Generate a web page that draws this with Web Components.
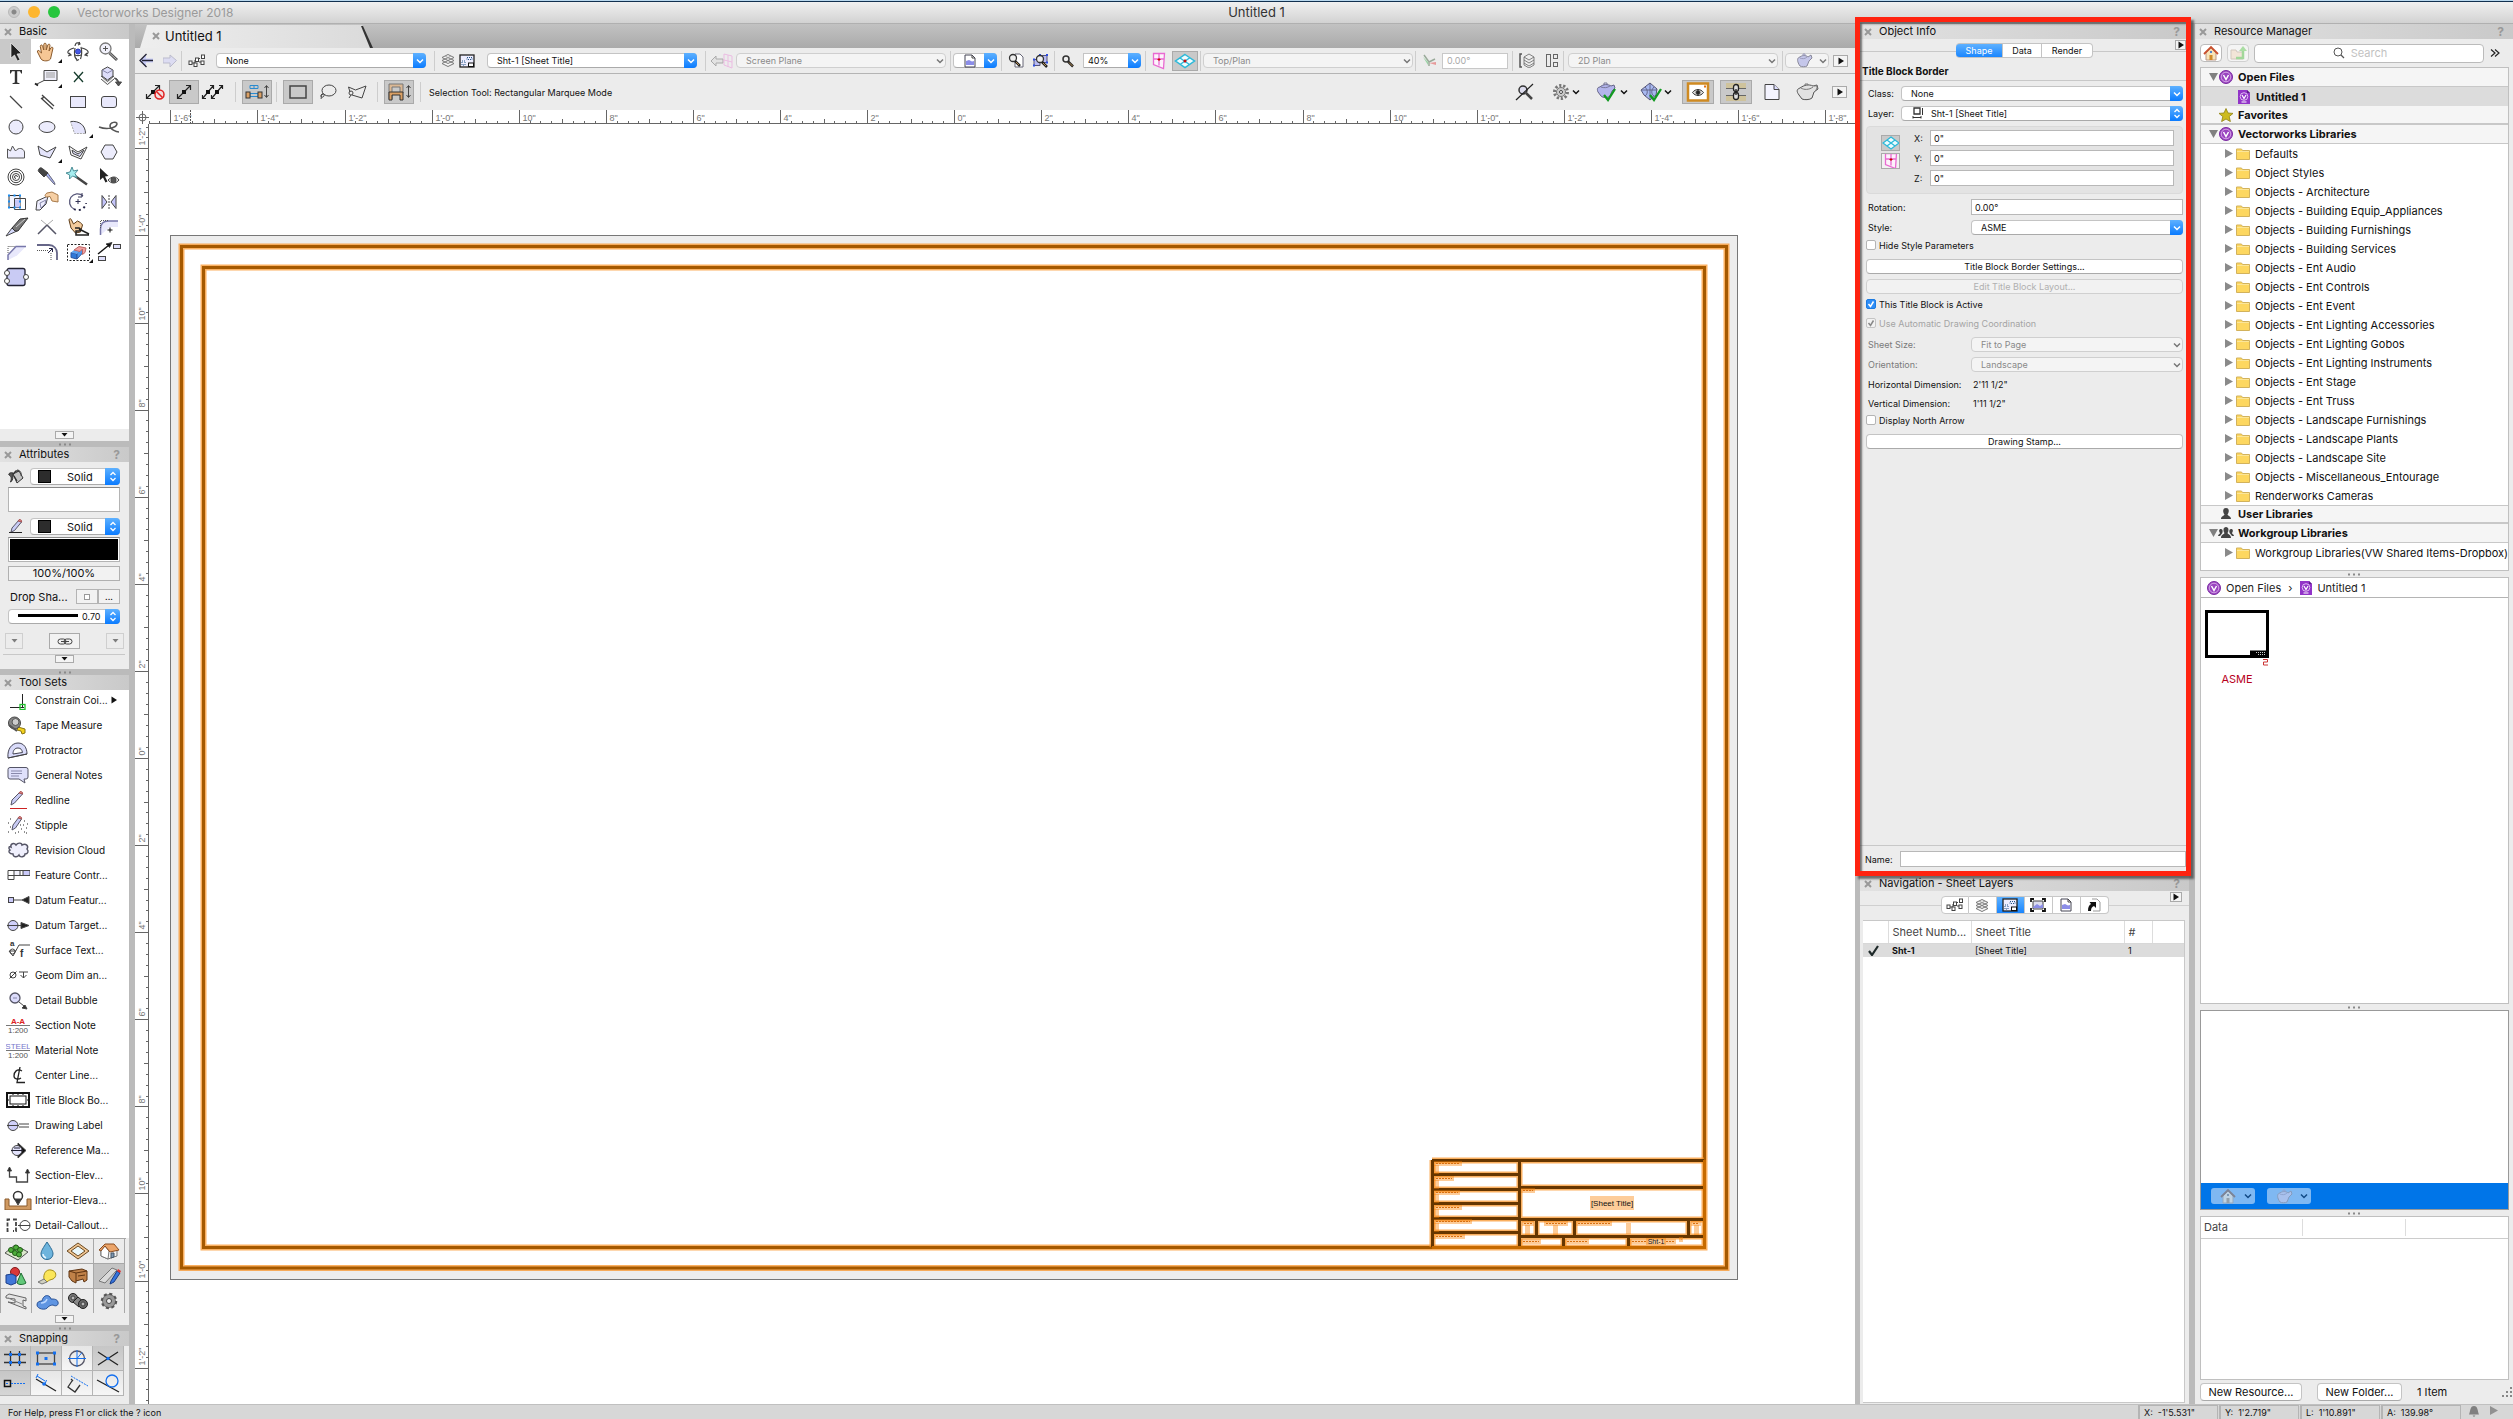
<!DOCTYPE html>
<html lang="en">
<head>
<meta charset="utf-8">
<title>Vectorworks Designer 2018 - Untitled 1</title>
<style>
html,body{height:100%;margin:0}
body{font-family:Inter,"Liberation Sans",sans-serif;color:#111;background:#ececec;overflow:hidden}
</style>
</head>
<body>
<vw-app></vw-app>
<script>
const K='#444';
/* name: [width, height, svg body]; strokes default to dark grey, no fill */
const ICONS={
close:[8,8,'<path d="M1 1l6 6M7 1L1 7" stroke="#999" stroke-width="2"/>'],
down:[9,6,'<path d="M1.500 1h6L4.500 4.500z" fill="#111" stroke="none"/>'],
play:[8,8,'<path d="M1.500 .500v7L7 4z" fill="#111" stroke="none"/>'],
chev:[8,6,'<path d="M1 1.500l3 3 3-3" stroke="currentColor" stroke-width="1.500"/>'],
updown:[8,11,'<path d="M1.500 4L4 1.500 6.500 4M1.500 7L4 9.500 6.500 7" stroke="currentColor" stroke-width="1.300"/>'],
dots:[14,3,'<path d="M1 1.500h2M6 1.500h2M11 1.500h2" stroke="#8a8a8a" stroke-width="2"/>'],
/* basic palette */
arrow:[26,22,'<path d="M8 2v15l3.500-3 3 6 2.500-1.200-3-5.800 4.500-.500z" fill="#222" stroke="#fff" stroke-width=".600"/>'],
hand:[26,22,'<path d="M7 18L3.500 11c-.600-2 1.300-2 2.200-.700L7.500 12 6.300 5.500c0-2 2-2 2.300-.300L9.800 9V3.500c.200-1.800 2.200-1.800 2.400 0V9L13.800 4c.700-1.500 2.400-1 2.200.700L15 10l2-3.300c1-1.200 2.500-.200 1.800 1.300L16.500 18c-2 2.500-7.500 2.500-9.500 0z" fill="#f6c795" stroke="#8a5a2c"/>'],
orbit:[26,22,'<circle cx="13" cy="10.500" r="2.500" fill="#4659e8" stroke="#2c3bb8"/><path d="M9 7C2 9 1 12 6 14M17 7c7 2 8 5 3 7M10 14c2 .800 4 .800 6 0M10 5c.500-3 2-4 4.500-2.500M16 6c1 4 1 8-.500 12M10 7c-1 5-.300 10 2 12M4 12l2 2-3 1M22 12l-2 2 3 1M14 1l1 2-2 1M11 17l1 2.500 2-1" stroke-width="1.200"/>'],
zoomt:[26,22,'<circle cx="9.500" cy="7.500" r="5.500" fill="#f1f1fb" stroke="#777" stroke-width="1.300"/><path d="M7 7.500h5M9.500 5v5" stroke="#555"/><path d="M13.500 12l7.500 7" stroke="#555" stroke-width="3"/><path d="M13.500 12l7 6.500" stroke="#bbb"/>'],
text:[26,22,'<path d="M7 4h12v3.500h-.800L17 5.200h-2.800V16.500l2.300.700v.800h-7v-.800l2.300-.700V5.200H9L7.800 7.500H7z" fill="#333" stroke="none"/>'],
callout:[26,22,'<path d="M10 4.500h13v10H10zM10 14.500l-8 4" fill="#f0f0fb"/><path d="M12 7h9M12 9h9M12 11h9" stroke="#999"/><path d="M1 17.500l3 2z" stroke="#222" stroke-width="2"/>'],
xmark:[26,22,'<path d="M9 6l9 10M18 6L9 16" stroke="#163c2c" stroke-width="1.300"/>'],
stack:[26,22,'<path d="M5 13l6.500 5.500L18 13M5 10l6.500 5.500L18 10" stroke="#555" fill="#eee"/><path d="M11.500 1L17 4v6l-5.500 4L6 10V4z" fill="#dedefa"/><path d="M6 4l5.500 3L17 4" stroke="#88a"/><path d="M18 12c3 0 4.500 2 4.500 5M19.500 16l3 4 3-4z" fill="#555"/>'],
line:[26,22,'<path d="M7 5l12 12" stroke-width="1.300"/>'],
dline:[26,22,'<path d="M7 7l12 11M8 4l12 11M9.500 6L8 8" stroke-width="1.300"/>'],
rect:[26,22,'<rect x="5.500" y="5.500" width="15" height="11" fill="#e9e9fc"/>'],
rrect:[26,22,'<rect x="5.500" y="5.500" width="15" height="11" rx="2.500" fill="#e9e9fc"/>'],
circ:[26,22,'<circle cx="13" cy="11" r="7" fill="#ececfc"/>'],
oval:[26,22,'<ellipse cx="13" cy="11" rx="8" ry="5.500" fill="#ececfc"/>'],
arc:[26,22,'<path d="M5.500 5.500c9-1 15 4 15 12H9.500" fill="#e4e4fb" stroke="none"/><path d="M5.500 5.500c9-1 15 4 15 12"/><path d="M5.500 5.500l4 12h11" stroke="#aaa" stroke-dasharray="2 1"/>'],
spiro:[26,22,'<path d="M3 11c8 3 17 1 18-3 0-3-7-2-7 2 0 3 6 6 9 6" stroke="#555" stroke-width="1.500"/>'],
curve:[26,22,'<path d="M4.500 17V8l3 2 2-5 3 5c3-4 8-3 9 1v6z" fill="#ececfc" stroke="#555"/>'],
poly:[26,22,'<path d="M4 5l9 6 9-5-6 11-10-3z" fill="#e4e4fb"/>'],
dpoly:[26,22,'<path d="M4 5l9 6 9-5-6 12-10-4z" fill="#fff"/><path d="M7 9l6 4 6-4-4 6.500-7-3z" fill="#dedefa"/>'],
hex:[26,22,'<path d="M9 4h8l4 7-4 7H9l-4-7z" fill="#ececfc"/>'],
spiral:[26,22,'<circle cx="13" cy="11" r="8"/><circle cx="13" cy="11" r="5.700"/><circle cx="13" cy="11" r="3.500"/><path d="M13 12.500a1.500 1.500 0 1 1 1.500-1.500"/>'],
dropper:[26,22,'<path d="M11 8l9 10 1 .500-.500-2L13 6z" fill="#a9b4f5" stroke="#667"/><path d="M5 3c1-2 3-1 4 0l5 4-4 4-5-5c-1-1-1-2 0-3z" fill="#444"/>'],
wand:[26,22,'<path d="M10 10l12 8.500" stroke="#444" stroke-width="2.500"/><path d="M7 1l1.500 4 4.500-1-3 3.500 2 4-4.500-1.500-3 3 .200-4L1 7l4-1z" fill="#a6eef0" stroke="#4b8d96"/>'],
seeker:[26,22,'<path d="M4 2v12l3-2.500 2.500 5 2-1-2.500-5 3.500-.500z" fill="#222" stroke="none"/><path d="M12 14c4-4 8-4 11 0-3 4-8 4-11 0z" fill="#ddd"/><circle cx="17.500" cy="14" r="2.500" fill="#555"/>'],
clip:[26,22,'<path d="M6 4.500h11v12H6z" fill="#f4f4fd" stroke="#333"/><path d="M11.500 7.500h11v11h-11z"/><path d="M12 8.500h5v8h-5z" fill="#c8c8f8" stroke="none"/><path d="M5 3.500h2v2H5zM10.500 3.500h2v2h-2zM16 3.500h2v2h-2zM5 9.500h2v2H5zM5 15.500h2v2H5zM16 9.500h2v2h-2zM16 15.500h2v2h-2zM10.500 15.500h2v2h-2z" fill="#1a8cf0" stroke="none"/>'],
push:[26,22,'<path d="M3 10l11-5-2 8-6 6H2z" fill="#eeeefe"/><path d="M6 12l6-3-1 4-4 4z" stroke="#88a"/><path d="M24 4l-6-3-5 1c-3 2-2 4 0 4l3-.500 2 4.500 6 1z" fill="#f6cfa4" stroke="#a87a4a"/>'],
rotate:[26,22,'<path d="M18 5A8 8 0 1 0 9 18" stroke="#557" stroke-width="1.300"/><path d="M9 18A8 8 0 0 0 21 12" stroke="#224" stroke-width="2" stroke-dasharray="2 3"/><path d="M17 2v4h-4M13 8v5M10.500 10.500h5" stroke="#335"/>'],
mirror:[26,22,'<path d="M6 4.500v13l5-6.500z" fill="#c5c5fa"/><path d="M20 4.500v13l-5-6.500z" fill="#c5c5fa"/><path d="M13 4v14" stroke-dasharray="2 1"/>'],
knife:[26,22,'<path d="M3 20l6-8 5 3z" fill="#d5d9fa"/><path d="M9 12l8-9 8-1-10 13-3 0z" fill="#777" stroke="#333"/><path d="M13 11l9-8" stroke="#ccc"/>'],
trim:[26,22,'<path d="M4 18L13 9l9 9" stroke="#556" stroke-width="1.500"/><path d="M13 9l6-5M13 9L7 4" stroke="#aaa"/>'],
splice:[26,22,'<path d="M6 12L4 4c.500-2 2-1.500 2.500 0L8.500 8l4-3c2 1 4 2 5 4l-2 7-5 1z" fill="#f3cb9c" stroke="#5b3a16"/><path d="M10 12h4c2 1 2 3 0 3h-3v4h4l9 0M14 13l10 5" stroke="#222" stroke-width="1.500"/>'],
fillet:[26,22,'<path d="M4.500 19V13c0-5 3-8 8-8H22v6H14z" fill="#e8e8fb" stroke="none"/><path d="M4.500 19v-6c0-5 3-8 8-8H22" stroke="#77a" stroke-width="1.500"/><path d="M4.500 12V4.500H13" stroke="#555" stroke-dasharray="1 1"/><path d="M14 11.500v5M11.500 14h5" stroke="#111"/>'],
chamfer:[26,22,'<path d="M5 19v-5l8-8.500h10l-9 9z" fill="#e8e8fb" stroke="none"/><path d="M5 19v-5l8-8.500h10" stroke="#77a" stroke-width="1.500"/><path d="M5 12V5.500h7" stroke="#555" stroke-dasharray="1 1"/>'],
offset:[26,22,'<path d="M3 4h12c5 0 8 4 8 8v7" stroke="#668" stroke-width="1.800"/><path d="M3 9.500h11M17 12v8" stroke="#555" stroke-dasharray="1 1"/><path d="M14 12l4-4M15 7.500h3.500V11" stroke="#224"/>'],
eraser:[26,22,'<rect x="2.500" y="3.500" width="22" height="16" stroke="#222" stroke-dasharray="2 1.500"/><path d="M6 11.500l6 1.500v5l-6-1.500z" fill="#2f78d8" stroke="#2a55a0"/><path d="M12 13l6-6v4.500L12 18z" fill="#4f95ea" stroke="#2a55a0"/><path d="M6 11.500L9 9l6 1.500-3 2.500z" fill="#5fa3f0" stroke="none"/><path d="M9 9l5-3.500 7 1.500-1 4.500-2.500 2V8L15 10.500z" fill="#f0a0a0" stroke="#b66"/>'],
connect:[26,22,'<path d="M2 13L13 4" stroke-width="1.400" stroke="#111"/><path d="M16 1.500l-6 1.500 3.500 3.500z" fill="#111"/><rect x="17.500" y="3.500" width="7" height="4" fill="#dedefa"/><rect x="2.500" y="15.500" width="7" height="4" fill="#dedefa"/>'],
node:[26,22,'<rect x="4" y="2.500" width="18" height="17" rx="2" fill="#c9cbf4" stroke="#223" stroke-width="1.300"/><circle cx="4" cy="7" r="2.500" fill="#fff"/><circle cx="4" cy="15" r="2.500" fill="#fff"/><circle cx="23" cy="11" r="2.500" fill="#fff"/>'],
/* attributes */
bucket:[16,16,'<path d="M5 5l6-3 4 7-6 5z" fill="#c4c4c4" stroke="#333"/><path d="M5 5l3-3 3 0M6 7l3 5" stroke="#333" stroke-width="1.300"/><path d="M5 4C2 3 0 5 1 6c2 1 3 3 1.500 7C5 12 5 8 5 5z" fill="#555" stroke="#333"/><path d="M9 1c3 0 5 3 4 6" stroke="#444"/>'],
pencil:[16,16,'<path d="M3 13l1-4 7-8 2.500 2-7 8.500z" fill="#c9ccf5" stroke="#556"/><path d="M10 2l1-1.300c2-.500 3 1 2.500 2.300z" fill="#e58a8a" stroke="#a55"/><path d="M1 13.500h13" stroke="#222"/>'],
chain:[16,9,'<rect x="1" y="2" width="8" height="5" rx="2.500"/><rect x="7" y="2" width="8" height="5" rx="2.500"/><path d="M4 4.500h8"/>'],
/* tool sets */
t0:[24,20,'<path d="M4 17.500h14M16.500 4v13" stroke="#222"/><rect x="14" y="14.500" width="5" height="5" stroke="#1fbf2c" stroke-width="1.300"/>'],
t1:[24,20,'<path d="M12 12l7 2v4l-3 1-1-3-4-1z" fill="#f2d11d" stroke="#8a7410"/><circle cx="8.500" cy="8" r="6" fill="#888" stroke="#444"/><circle cx="9.500" cy="7" r="3.500" fill="#ccc" stroke="#555"/><path d="M3 10l8 6" stroke="#555" stroke-width="2"/>'],
t2:[24,20,'<path d="M2 18C1 9 6 3 12 3s9 5 9 11z" fill="#d9dbfa" stroke="#445"/><path d="M7 14c0-4 2-6 5-6s4 2 4.500 4.500z" fill="#fff" stroke="#445"/><path d="M2 18l19-4"/>'],
t3:[24,20,'<path d="M4 2.500h16q2 0 2 2V12q0 2-2 2h-2l1 4-6-4H4q-2 0-2-2V4.500q0-2 2-2z" fill="#dfe0fb" stroke="#556"/><path d="M5 6h11M5 8.500h11M5 11h8" stroke="#88a"/>'],
t4:[24,20,'<path d="M5 15l1-5 8-8 2.500 2-8 9z" fill="#c9ccf5" stroke="#556"/><path d="M13 3l1-1.300c2-.500 3 1 2.500 2.300z" fill="#e58a8a" stroke="#a55"/><path d="M4 18.500h17" stroke="#c22"/>'],
t5:[24,20,'<path d="M6 15l1-5 6-8 2.500 2-6 9z" fill="#c9ccf5" stroke="#556"/><path d="M12 3l1-1.300c2-.500 3 1 2.500 2.300z" fill="#e58a8a" stroke="#a55"/><path d="M2 8h1M4 12h1M2 17h1M12 17h1M15 14h1M18 17h1M17 10h1M20 13h1M14 10h1M18 6h1M9 18h1M4 4h1M21 9h1M20 18h1" stroke="#222" stroke-width="1.200"/>'],
t6:[24,20,'<path d="M5 7c-1-3 3-5 5-2 2-3 6-2 6 0 4-2 7 1 5 4 2 2 1 5-2 5 0 3-5 4-6 1-2 3-6 2-6-1-4 0-5-3-3-4-2-2-1-4 1-3z" fill="#f0f0fd" stroke="#556" stroke-width="1.400"/>'],
t7:[24,20,'<path d="M2 5.500h22v5H2zM2 10.500v4h6v-4" fill="#fff"/><path d="M8 5.500h6v5H8z" fill="#f2f2fd"/><path d="M17 5.500h7v5h-7z" fill="#c9c9f8"/>'],
t8:[24,20,'<rect x="2.500" y="7.500" width="5" height="5" fill="#c9c9f8"/><path d="M8 10h8"/><path d="M23 6.500v7L16 10z" fill="#222"/>'],
t9:[24,20,'<circle cx="7" cy="10.500" r="5" fill="#d0d0fa"/><path d="M1 10.500h16"/><path d="M15 7.500v6l8-3z" fill="#222"/>'],
t10:[24,20,'<path d="M3 11l4 5 6-11h11M3 11h7"/><circle cx="6.500" cy="11.500" r="2.500"/><text x="4" y="6" font-size="8" font-weight="700" fill="#333" stroke="none" font-family="Liberation Sans">a</text><text x="14" y="17" font-size="10" font-weight="700" fill="#333" stroke="none" font-family="Liberation Sans">f</text>'],
t11:[24,20,'<circle cx="7" cy="10" r="3"/><path d="M3.500 13.500l7-7M13 7h9M17.500 7v6M14.500 10l3 3 3-3"/>'],
t12:[24,20,'<circle cx="9" cy="8" r="5" fill="#dcdcfc" stroke="#556" stroke-width="1.300"/><path d="M7 8h4" stroke="#88a"/><path d="M13 12l5 4"/><path d="M21 19l-5-1 3-3z" fill="#333"/>'],
t13:[24,20,'<path d="M0 10.500h24" stroke="#777"/><text x="12" y="9" text-anchor="middle" font-size="8" font-weight="700" fill="#d22" stroke="none" font-family="Liberation Sans">A-A</text><text x="12" y="18" text-anchor="middle" font-size="8" fill="#555" stroke="none" font-family="Liberation Sans">1:200</text>'],
t14:[24,20,'<path d="M0 10.500h24" stroke="#777"/><text x="12" y="9" text-anchor="middle" font-size="8" fill="#77c" stroke="none" font-family="Liberation Sans">STEEL</text><text x="12" y="18" text-anchor="middle" font-size="8" fill="#555" stroke="none" font-family="Liberation Sans">1:200</text>'],
t15:[24,20,'<path d="M16 6c-5-3-8 1-8 5 0 3 4 4 7 2M14 2l-3 15.500h8" stroke="#222" stroke-width="1.300"/>'],
t16:[24,20,'<rect x="1" y="3" width="22" height="14" stroke="#111" stroke-width="2"/><rect x="4" y="6" width="16" height="8" stroke="#111"/><path d="M7 4v1M12 4v1M17 4v1M7 15v1M12 15v1M17 15v1M2 10h1M21 10h1" stroke="#111"/>'],
t17:[24,20,'<circle cx="7" cy="10.500" r="5" fill="#d0d0fa"/><path d="M1 10.500h12M13 9h10M13 12h10"/>'],
t18:[24,20,'<path d="M12 3l8 7.500-8 7.500z" fill="#111"/><circle cx="11" cy="10.500" r="5" fill="#e3e3fc"/><path d="M5 10.500h12M8 8h6" stroke="#223"/>'],
t19:[24,20,'<path d="M3.500 6v6h7v5h11V8" stroke-width="1.300"/><path d="M1.500 6l2-4 2 4zM19.500 8l2-4 2 4z" fill="#222"/>'],
t20:[28,20,'<path d="M1 9h4v7h18V9h4v11H1z" fill="#d09a62" stroke="#8a5a2c"/><circle cx="14" cy="6" r="4.500" fill="#fff" stroke="#333" stroke-width="1.500"/><path d="M10.500 9l3.500 6 3.500-6z" fill="#333"/>'],
t21:[26,20,'<path d="M5 4.500H2.500V16H5M8 4.500h3V16H8" stroke-width="1.800" stroke-dasharray="4 1.500"/><circle cx="20" cy="10.500" r="5"/><path d="M13 10.500h12"/>'],
g0:[24,20,'<path d="M1 12l10-8 13 7-10 8z" fill="#dbe8cc" stroke="#555"/><circle cx="7" cy="9" r="2.500" fill="#4fae3c" stroke="#205f16"/><circle cx="12" cy="6.500" r="2.500" fill="#4fae3c" stroke="#205f16"/><circle cx="11" cy="12" r="2.500" fill="#4fae3c" stroke="#205f16"/><circle cx="16" cy="9" r="2.500" fill="#4fae3c" stroke="#205f16"/><circle cx="15" cy="13.500" r="2.500" fill="#4fae3c" stroke="#205f16"/>'],
g1:[24,20,'<path d="M12 1c4 6 6 9 6 12a6 5.500 0 0 1-12 0c0-3 2-6 6-12z" fill="#6db4dd" stroke="#2d6c96"/><path d="M8 13c0 2 1 3 3 4" stroke="#e5f5ff" stroke-width="1.500"/>'],
g2:[24,20,'<path d="M12 2l11 8-11 8L1 10z" fill="#f0c592" stroke="#6b4a22"/><path d="M12 5l7 5-7 5-7-5z" fill="#e9f7fb" stroke="#6b4a22"/>'],
g3:[24,20,'<path d="M4 9v6l7 3 9-3V8z" fill="#f2f2f2" stroke="#777"/><path d="M4 9l4-4 4 5-1 8-7-3z" fill="#fff" stroke="#777"/><path d="M2 9l6-6 9 0 5 6-9 2-5-6-4 5z" fill="#eba469" stroke="#8a4c20"/><path d="M14 12h3v4l-3 1z" fill="#7c96b0" stroke="#456"/>'],
g4:[24,20,'<circle cx="11" cy="6" r="4.500" fill="#d8383a" stroke="#831b1e"/><path d="M2 9l6-1 4 2v7l-5 2-5-2z" fill="#4177d8" stroke="#1c3f8a"/><path d="M17 7l5 10c-3 2-7 2-9 0z" fill="#63c87a" stroke="#1d6b30"/>'],
g5:[24,20,'<path d="M9 13c-1-5 2-10 7-9 6 1 6 7 2 9-3 1-4 1-6 3z" fill="#fbe65a" stroke="#a58d18"/><path d="M3 16l6-3 3 3-5 2z" fill="#d0d0c0" stroke="#777"/>'],
g6:[24,20,'<path d="M3 5l13-2 5 2v9l-3 2-1-3-7 2v2l-4-2-3-4z" fill="#c08148" stroke="#5e3412"/><path d="M3 5l7 2 11-2M10 7v8M12 10l7-1" stroke="#5e3412"/>'],
g7:[24,20,'<path d="M2 15L15 2l5 2L8 17z" fill="#dadada" stroke="#777"/><path d="M14 15l6-10 3 2-6 9-4 2z" fill="#3774dd" stroke="#183d85"/><path d="M20 5l1-2 3 2-1 2z" fill="#d33" stroke="none"/>'],
g8:[24,20,'<path d="M2 5l3-2 17 4v3l-3-1v6l3 1v2L4 11l7 1V8L2 7z" fill="#e4e4e4" stroke="#666"/><path d="M4 7l14 6" stroke="#888"/>'],
g9:[24,20,'<path d="M2 14c0-3 2-4 5-4 1-5 5-7 8-4l1 2c3 0 6 0 7 3s-2 5-5 3c-2 0-4 1-5 2-2 4-11 2-11-2z" fill="#5f95e2" stroke="#2a5296"/><path d="M6 12c3 0 5-1 6-4" stroke="#bcd8ff" stroke-width="1.500"/>'],
g10:[24,20,'<circle cx="7" cy="7" r="4.500" fill="#777" stroke="#222"/><path d="M7 11l6 5 5-5-6-5z" fill="#888" stroke="#222"/><circle cx="17" cy="13" r="4.500" fill="#666" stroke="#222"/><circle cx="17" cy="13" r="2" fill="#bbb"/><circle cx="7" cy="7" r="2" fill="#bbb"/>'],
g11:[24,20,'<circle cx="12" cy="10" r="7" fill="#777" stroke="#555" stroke-width="2.500" stroke-dasharray="3 2.500"/><circle cx="12" cy="10" r="6" fill="#999" stroke="none"/><circle cx="12" cy="10" r="2.500" fill="#eee"/>'],
/* snapping */
s0:[26,20,'<path d="M8.500 3v15M17.500 3v15M2 6.500h22M2 14.500h22" stroke="#333" stroke-width="1.300"/><path d="M7 5h3v3H7zM16 5h3v3h-3zM7 13h3v3H7zM16 13h3v3h-3z" fill="#1470f0" stroke="none"/>'],
s1:[26,20,'<rect x="4.500" y="5" width="17" height="11" stroke-width="1.300"/><path d="M3 3.500h3v3H3zM20 3.500h3v3h-3zM3 14.500h3v3H3zM20 14.500h3v3h-3zM11.500 9h3v3h-3z" fill="#1470f0" stroke="none"/>'],
s2:[26,20,'<circle cx="13" cy="10.500" r="7.500" stroke="#556" stroke-width="1.300"/><path d="M13 2v17M4 10.500h18M13 10.500l5-6" stroke="#1470f0"/>'],
s3:[26,20,'<path d="M3 4l20 13M3 17L23 4" stroke="#222" stroke-width="1.300"/><circle cx="13" cy="10.500" r="1.800" fill="#1470f0" stroke="none"/>'],
s4:[26,20,'<rect x="2.500" y="7.500" width="6" height="6" stroke="#111" stroke-width="1.500"/><path d="M4 10.500h2M9 10.500h15" stroke="#1470f0" stroke-dasharray="2 1"/>'],
s5:[26,20,'<path d="M3 6l20 12" stroke="#222" stroke-width="1.300"/><path d="M4 3l8 5M12 11l1.500-4M3 5l2-4" stroke="#1470f0"/><circle cx="11" cy="11" r="1.800" fill="#1470f0" stroke="none"/>'],
s6:[26,20,'<path d="M8 8l-4 6 7 5 5-7M9 8l-2-2" stroke="#333" stroke-width="1.300"/><path d="M7 3l17 10" stroke="#1470f0" stroke-dasharray="2 1"/>'],
s7:[26,20,'<path d="M2 7l22 12" stroke="#222" stroke-width="1.300"/><circle cx="17" cy="8" r="6" stroke="#1470f0" stroke-width="1.300"/>'],
/* view bar */
back:[14,16,'<path d="M7 1.500v4h7v4H7v4L1 7.500z" fill="#c9cdf8" stroke="none"/><path d="M7.500 1L1 7.500 7.500 14M3 7.500h11" stroke="#223" stroke-width="1.300"/>'],
fwd:[14,16,'<path d="M7 2v3H0v5h7v4l6.500-6.500z" fill="#dcdcf2" stroke="#bbc"/>'],
cls:[18,14,'<path d="M3 9h4V6M8 8l4-4M11 8h4" stroke="#444"/><rect x="1" y="7" width="3" height="3.500" fill="#fff"/><rect x="6" y="9" width="3" height="3.500" fill="#fff"/><rect x="7.500" y="4" width="3" height="3.500" fill="#fff"/><rect x="13.500" y="1" width="3" height="3.500" fill="#fff"/><rect x="13" y="7" width="3" height="3.500" fill="#fff"/>'],
lay:[14,15,'<path d="M1 10.500l6 3 6-3-6-3zM1 7.500l6 3 6-3-6-3zM1 4.500l6 3 6-3-6-3z" fill="#f4f4f4" stroke="#777"/><path d="M4 3l6 3M10 3L4 6" stroke="#999" stroke-width=".800"/>'],
sheet:[16,14,'<rect x="1" y="1" width="14" height="12" fill="#eef" stroke="#222" stroke-width="1.300"/><path d="M3 7h3v4H3zM8 3.500h5v2H8z" stroke="#258" stroke-dasharray="1 1"/><rect x="9.500" y="9" width="5" height="3.500" fill="#fff" stroke="#111"/>'],
plane:[24,16,'<g opacity=".650"><path d="M1 8l5-5v3h7v4H6v3z" fill="#ddd" stroke="#888"/><path d="M14 1l8 2v12l-8-3zM14 7l8 2M18 2v12" stroke="#eba2dd"/></g>'],
pg:[14,14,'<path d="M2 1h7l3 3v9H2z" fill="#fff" stroke="#445"/><path d="M3 11V7l3-1 3 1.500 2-.500v4z" fill="#8b8de8" stroke="none"/><path d="M9 1v3h3"/>'],
magpg:[16,15,'<path d="M7 1h5l3 3v10H7z" fill="#fff" stroke="#667"/><circle cx="5" cy="5" r="3.500" fill="#eee" stroke="#333" stroke-width="1.300"/><path d="M7 8l5 5" stroke="#222" stroke-width="2.500"/><path d="M8 9l3 3" stroke="#b98d50"/>'],
magsel:[18,15,'<path d="M2 6.500h6v6H2zM8 2.500h7v7H8z" fill="#b9bbf4" stroke="#557"/><path d="M1 5.500h2v2H1zM1 11.500h2v2H1zM7 1h2v2H7zM14 1h2v2h-2zM14 8.500h2v2h-2z" fill="#2b4ae0" stroke="none"/><circle cx="8" cy="6" r="3.500" fill="#eee" stroke="#333" stroke-width="1.300"/><path d="M10 9l5 5" stroke="#222" stroke-width="2.500"/><path d="M11 10l3 3" stroke="#b98d50"/>'],
mag:[14,14,'<circle cx="5" cy="5" r="3" fill="#eee" stroke="#333" stroke-width="1.500"/><path d="M7 7.500l5 5" stroke="#222" stroke-width="2.500"/><path d="M8 8.500l3.500 3.500" stroke="#b98d50"/>'],
pink:[14,18,'<path d="M1.500 1.500h11l-1 15-10-4zM1.500 7h11M7 1.500v12" fill="#fdf2fb" stroke="#e96ad2" stroke-width="1.300"/><path d="M5.500 7.500h3M7 6v3" stroke="#c00"/>'],
cyan:[18,14,'<path d="M9 1l8 6-8 6-8-6zM5 4l8 6M13 4l-8 6" fill="#eefcff" stroke="#2cb9d9" stroke-width="1.300"/>'],
cyanr:[22,16,'<path d="M11 1.500l9.500 6.500-9.500 6.500L1.500 8zM6 5l9.500 6.500M15.500 5L6 11.500" fill="#eefcff" stroke="#2cb9d9" stroke-width="1.500"/><path d="M9.500 8h3M11 6.500v3" stroke="#c00" stroke-width="1.500"/>'],
axis:[16,15,'<path d="M2 2l5 7 6-3M7 9v4" stroke="#9a9" stroke-width="1.500"/><path d="M1 4l5 5v3z" fill="#9ad3a5" stroke="none"/><path d="M7 10l7-1v3z" fill="#e79a9a" stroke="none"/>'],
mlay:[16,15,'<path d="M3 1H1v13h2" stroke="#555" stroke-width="1.500"/><path d="M5 4l5-3 5 3v8l-5 3-5-3zM5 4l5 3 5-3M5 7l5 3 5-3M5 10l5 3 5-3" stroke="#666" stroke-width=".800"/>'],
panes:[14,15,'<rect x="1.500" y="1.500" width="4" height="12" stroke="#666"/><rect x="8.500" y="1.500" width="4" height="4" stroke="#666"/><rect x="8.500" y="9.500" width="4" height="4" stroke="#666"/>'],
pot:[18,15,'<path d="M4 4.500C2 5 2 9 5 13c1 1 6 1 7 0l2-5 3-3-1-3-3 2c-2-2-6-2-9 .500z" fill="#c5c7ea" stroke="#889"/><path d="M5 5c2 1 5 1 7-1M8 3V1h2v2" stroke="#99b"/>'],
/* tool mode bar */
nosnap:[20,16,'<path d="M2 14L14 2M10 1.500h4.500V6M1.500 10v4.500H6" stroke="#222" stroke-width="1.200"/><path d="M6 6h4v4H6z" fill="#111" stroke="none"/><circle cx="14.500" cy="10.500" r="4.500" stroke="#e02020" stroke-width="1.500" fill="#f3dcdc"/><path d="M11.500 7.500l6 6" stroke="#e02020" stroke-width="1.500"/>'],
snap:[16,16,'<path d="M2 14L14 2M10 1.500h4.500V6M1.500 10v4.500H6" stroke="#222" stroke-width="1.200"/><path d="M6 6h4v4H6z" fill="#111" stroke="none"/>'],
snap2:[24,16,'<path d="M2 14L12 2M9 1.500h3.500V5M1.500 11v3.500H5M11 14L21 2M18 1.500h3.500V5M10.500 11v3.500H14" stroke="#222" stroke-width="1.200"/><path d="M5 6h4v4H5zM14 6h4v4h-4z" fill="#111" stroke="none"/>'],
mv:[26,18,'<path d="M6 2.500h8v3H6zM10 2.500v3M6 10.500h8v3H6zM4 10.500h14" stroke="#2a8bd0"/><rect x="2" y="9" width="4" height="6" fill="#dba064" stroke="#333"/><rect x="14" y="9" width="4" height="6" fill="#dba064" stroke="#333"/><path d="M22.500 3v11M20.500 5l2-2.500 2 2.500M20.500 12l2 2.500 2-2.500"/>'],
box:[18,14,'<rect x="1" y="1" width="16" height="12" stroke-width="1.500"/>'],
lasso:[18,16,'<ellipse cx="10" cy="6.500" rx="7" ry="5.500"/><path d="M4 10c-3 1-2 4 0 3s1-4-1-3 0 4-1 5"/>'],
plasso:[20,16,'<path d="M3 8L1.500 3l7 3L19 2l-4 12-10-3"/><circle cx="4" cy="9" r="2"/><path d="M4 11l-2 3"/>'],
door:[26,20,'<path d="M3 17V2h14v9h-3V5H6v12z" fill="#dbb894" stroke="#777"/><path d="M3 18v-8h14v8h-3v-5H6v5z" fill="#dba064" stroke="#333"/><path d="M22.500 4v11M20.500 6l2-2.500 2 2.500M20.500 13l2 2.500 2-2.500"/>'],
magslash:[22,18,'<circle cx="9" cy="7" r="4" fill="#dde" stroke="#333" stroke-width="1.500"/><path d="M12 10l6 6" stroke="#444" stroke-width="2.500"/><path d="M2 17L19 1" stroke="#222" stroke-width="1.200"/>'],
gear:[18,18,'<circle cx="9" cy="9" r="6.500" stroke="#777" stroke-width="3" stroke-dasharray="2.200 1.800"/><circle cx="9" cy="9" r="4.500" fill="#ccc" stroke="#777"/><circle cx="9" cy="9" r="1.500" fill="#fff"/>'],
pot2:[22,20,'<path d="M4 5C1 5 1 8 2 10l3 4c2 2 7 2 9 0l2-5 3-3-1-3-3 1C12 2 7 2 4 5z" fill="#b3b5ec" stroke="#668"/><path d="M5 5c3 1 6 1 9-1M8 3V1h3v2" stroke="#779"/><path d="M8 13l4 5 7-11" stroke="#129a22" stroke-width="2.300"/>'],
globe:[22,20,'<path d="M10 1l7 6-1 6-6 5-6-5-3-5z" fill="#a7b8f0" stroke="#557"/><path d="M2 8h15M10 1v17M5 5c3 3 3 7 0 9M14 5c-3 3-3 7 0 9" stroke="#557" stroke-width=".800"/><path d="M10 13l4 5 7-11" stroke="#129a22" stroke-width="2.300"/>'],
eye:[26,20,'<rect x="3" y="1.500" width="20" height="17" fill="#fff" stroke="#cf8a22" stroke-width="2.500"/><path d="M7.500 10.500c3-4 8-4 11 0-3 4-8 4-11 0z" fill="#ddd" stroke="#333"/><circle cx="13" cy="10.500" r="2" fill="#222"/><path d="M19 4.500h2" stroke="#e07010" stroke-width="2"/>'],
link:[26,20,'<path d="M3 1h20v5H3zM3 13h20v6H3z" fill="#cfc39c" stroke="none"/><path d="M3 6.500h20M3 13.500h20" stroke="#666"/><rect x="10.500" y="2.500" width="5" height="7" rx="2.500" fill="#ddd" stroke="#222" stroke-width="1.300"/><rect x="10.500" y="10.500" width="5" height="7" rx="2.500" fill="#ddd" stroke="#222" stroke-width="1.300"/><path d="M13 7v6" stroke="#222" stroke-width="1.300"/>'],
page:[16,18,'<path d="M1 1.500h9l5 5v10H1z" fill="#f4f4ff" stroke="#444"/><path d="M10 1.500v5h5" fill="#ddf"/>'],
pot3:[24,18,'<path d="M4 5C1 6 0 8 3 12l3 4c2 1 8 1 10-1l2-6 4-3-1-4-4 1C13 1 8 2 4 5z" fill="#e2e2e2" stroke="#555"/><path d="M5 5c3 2 8 2 12-1M9 3V1h3v1M18 3c4-1 4 3 0 6" stroke="#777"/>'],
target:[13,13,'<circle cx="6.500" cy="6.500" r="3.500" stroke="#666"/><path d="M6.500 0v13M0 6.500h13" stroke="#666"/>'],
/* object info, navigation, resources */
laysm:[12,12,'<path d="M2 1h6v6H2z" stroke-width="1.300" stroke="#333"/><path d="M1 10.500h8M10.500 1v7M1 9v2.500M9 9v2.500" stroke="#333"/>'],
vport:[16,14,'<path d="M3 3h10v8H3z" fill="#dde"/><path d="M3 9l4-3 3 2 3-2v4H3z" fill="#8b8de8" stroke="none"/><path d="M1 4V1h3M12 1h3v3M15 10v3h-3M4 13H1v-3" stroke="#111" stroke-width="1.800"/>'],
refa:[14,14,'<path d="M5 1h5l3 3v9H6" fill="#fff" stroke="#999"/><path d="M1 13c0-4 1-6 3-7L2.500 4H9v6L7 8c-2 1-3 2-3 5z" fill="#111" stroke="none"/>'],
check:[11,11,'<path d="M1 6l3 4 6-9" stroke="#1f2a2a" stroke-width="2.200"/>'],
tick:[8,8,'<path d="M1.500 4l2 2.500L6.500 1.500" stroke="currentColor" stroke-width="1.500"/>'],
home:[18,16,'<path d="M4 8v7h10V8L9 3z" fill="#f7e4b8" stroke="#b98"/><path d="M7.500 10h3v5h-3z" fill="#d08b2a" stroke="none"/><path d="M2 9l7-7 7 7" stroke="#c9502e" stroke-width="1.800"/><rect x="8" y="6" width="2" height="2" fill="#58c" stroke="none"/>'],
upf:[18,16,'<g opacity=".600"><path d="M2 5h5l1 2h6v7H2z" fill="#f2dcc4" stroke="#ba9"/><path d="M7 13h7V6" stroke="#6cc460" stroke-width="2.500"/><path d="M10 6l4-5 4 5z" fill="#7ccf70" stroke="none"/></g>'],
search:[12,12,'<circle cx="5" cy="5" r="4" stroke="#555"/><path d="M8 8l3 3" stroke="#555" stroke-width="1.300"/>'],
more:[10,10,'<path d="M1 1.500L5 5 1 8.500M5 1.500L9 5 5 8.500" stroke="#222" stroke-width="1.200"/>'],
vw:[14,14,'<circle cx="7" cy="7" r="6.500" fill="#9a45c0" stroke="#7b2ba2"/><circle cx="7" cy="7" r="4.800" stroke="#e3bdf0" stroke-width=".800"/><path d="M4.500 5l2.500 4.500L9.500 5" stroke="#fff" stroke-width="1.500"/>'],
vwf:[14,14,'<path d="M1 0h9l3 3v11H1z" fill="#9234c8" stroke="none"/><path d="M10 0v3h3z" fill="#5b1b86" stroke="none"/><circle cx="7" cy="6.500" r="3.800" stroke="#e9ccf5" stroke-width=".900"/><path d="M5 5l2 3.500L9 5M4.500 12h5" stroke="#fff" stroke-width="1.200"/>'],
star:[14,14,'<path d="M7 .500l2 4.500 5 .400-3.800 3.200 1.200 5L7 11l-4.400 2.600 1.200-5L0 5.400l5-.400z" fill="#cdbb1f" stroke="#8f8212" stroke-width=".800"/>'],
folder:[14,12,'<path d="M.500 1h5l1 1.500h7V11.500H.500z" fill="#fdd760" stroke="#d2b25c"/><path d="M1 3.500h12" stroke="#fbe69a"/>'],
user:[14,12,'<path d="M7 0c4 0 3 5 1.500 6.500C9 8 12 8 12 11H2c0-3 3-3 3.500-4.500C4 5 3 0 7 0z" fill="#444" stroke="none"/>'],
group:[16,12,'<path d="M8 0c3 0 3 4 1.500 6 .500 1.500 3.500 1.500 3.500 5H3c0-3.500 3-3.500 3.500-5C5 4 5 0 8 0zM3 2c2 0 2 3 1 4.500L2 9H0c0-2 2-1.500 2-3C.500 4 1 2 3 2zM13 2c-2 0-2 3-1 4.500L14 9h2c0-2-2-1.500-2-3C15.500 4 15 2 13 2z" fill="#444" stroke="none"/>'],
tdown:[9,8,'<path d="M0 0h9L4.500 8z" fill="#808080" stroke="none"/>'],
tright:[8,9,'<path d="M0 0v9l8-4.500z" fill="#8a8a8a" stroke="none"/>'],
bell:[12,12,'<path d="M6 0c4 0 3.500 5 5 8.500H1C2.500 5 2 0 6 0zM4.500 9.500h3L6 11z" fill="#777" stroke="none"/>'],
thumb:[64,56,'<rect x="1.500" y="1.500" width="61" height="45" fill="#fff" stroke="#000" stroke-width="3"/><path d="M45 40.500h17v5H45z" fill="#000" stroke="none"/><path d="M51 42.500h10M53 44.500h8" stroke="#fff" stroke-width=".800" stroke-dasharray="1 1"/><path d="M58 49.500h4.500v2.500H58.500v3h4.500" stroke="#c33"/>'],
grip:[12,12,'<path d="M9 2h2M5 6h2M9 6h2M1 10h2M5 10h2M9 10h2" stroke="#666" stroke-width="1.500"/>']
};
const BASE=`
*{box-sizing:border-box}
:host{display:block}
button,select,input{font:inherit;color:inherit;margin:0}
button{padding:0;border:0;background:none;display:flex;align-items:center;justify-content:center}
vw-icon{flex:none}
.sel{display:grid;height:15px;flex:none}
.sel>*{grid-area:1/1}
.sel select{appearance:none;width:100%;height:100%;min-width:0;background:#fff;border:1px solid #c4c4c4;border-bottom-color:#aaa;border-radius:4px;padding:0 16px 0 9px;font-size:9px;outline:0}
.sel .cap{justify-self:end;width:13px;display:flex;align-items:center;justify-content:center;border-radius:0 4px 4px 0;background:linear-gradient(#5eb1ff,#0a7bff);color:#fff;pointer-events:none}
.sel.off select{background:#f4f4f4;color:#8a8a8a;border-color:#cfcfcf;opacity:1}
.sel.off .cap{background:none;color:#777}
.mini{border:1px solid #aaa;background:#f4f4f4}
`;
const def=(n,css,html,init)=>customElements.define(n,class extends HTMLElement{
  connectedCallback(){
    if(this.shadowRoot)return;
    const r=this.attachShadow({mode:'open'});
    const t=document.createElement('template');
    t.innerHTML=`<style>${BASE}${css}</style>${typeof html==='function'?html(this):html}`;
    r.append(t.content.cloneNode(true));
    if(init)init(r,this);
  }});
const ic=n=>`<vw-icon n="${n}"></vw-icon>`;
const sel=(label,val,o={})=>`<span class="sel ${o.off?'off':''} ${o.cls||''}"><select aria-label="${label}" ${o.id?`id="${o.id}"`:''} ${o.off?'disabled':''}><option>${val}</option></select><i class="cap">${ic(o.ud?'updown':'chev')}</i>${o.extra||''}</span>`;

customElements.define('vw-icon',class extends HTMLElement{
  connectedCallback(){
    if(this.shadowRoot)return;
    const [w,h,b]=ICONS[this.getAttribute('n')];
    this.attachShadow({mode:'open'}).innerHTML=`<style>:host{display:block;line-height:0}svg{display:block}</style><svg width="${w}" height="${h}" viewBox="0 0 ${w} ${h}" fill="none" stroke="${K}" aria-hidden="true">${b}</svg>`;
  }});

def('vw-head',`
:host{height:15px;flex:none;background:linear-gradient(90deg,#e2e2e2,#c9c9c9)}
.h{display:flex;align-items:center;height:15px;padding:0 9px 0 4px;font-size:11px;gap:7px;line-height:15px;color:#111}
span{flex:1;white-space:nowrap}
b{color:#999;font-size:12px}`,
e=>`<div class="h"><button aria-label="Close">${ic('close')}</button><span><slot></slot></span>${e.hasAttribute('help')?'<b>?</b>':''}</div>`);

def('vw-more',`:host{height:12px;flex:none;background:#ececec}div{display:flex;justify-content:center;padding-top:2px}
button{width:19px;height:8px}`,`<div><button class="mini" aria-label="More">${ic('down')}</button></div>`);

def('vw-divider',`:host{height:6px;flex:none;background:var(--bar,#bbb)}div{display:flex;height:6px;align-items:center;justify-content:center}`,`<div>${ic('dots')}</div>`);

/* ---- left column ---- */
const basic='arrow hand* orbit zoomt text callout* xmark stack line dline rect rrect circ oval arc* spiro curve poly* dpoly hex spiral dropper wand seeker clip push rotate mirror knife trim splice fillet chamfer offset eraser* connect node'.split(' ');
def('vw-basic',`:host{flex:1;background:#fff;min-height:0}
.g{display:grid;grid-template-columns:repeat(4,31px);grid-auto-rows:25px}
button{position:relative}
.on{background:#c9c9c9}
.fly::after{content:"";position:absolute;right:0;bottom:1px;border:2px solid transparent;border-right-color:#111;border-bottom-color:#111}`,
`<div class="g">${basic.map((n,i)=>`<button aria-label="${n.replace('*','')}" class="${i?'':'on'} ${n.endsWith('*')?'fly':''}">${ic(n.replace('*',''))}</button>`).join('')}</div>`);

def('vw-attributes',`:host{flex:none;height:207px;background:#ececec}
.w{display:flex;flex-direction:column;padding:6px 9px 0 8px}
.r{display:flex;align-items:center;justify-content:space-between;height:17px}
.r .sel{width:90px;height:17px}
.r .sel select{padding:0 22px 0 36px;font-size:11px}
.r .sel .cap,.line .cap{width:15px}
.sw{width:13px;height:13px;margin:2px 0 0 8px;background:#2c2c2c;border:1px solid #000;pointer-events:none}
.box{height:25px;border:1px solid #b4b4b4;border-top-color:#888;margin:2px 0 6px;background:#fff;padding:1px}
.box.k{margin-bottom:4px}.box.k::after{content:"";display:block;height:21px;background:#000}
.pct{height:15px;border:1px solid #b0b0b0;font-size:11px;line-height:13px;background:#f2f2f2}
.ds{display:flex;align-items:center;height:15px;margin:8px 0 5px;font-size:11px;padding-left:2px}
.ds span{flex:1}
.ds button{width:22px;height:15px;border:1px solid #b4b4b4;background:#f2f2f2;font-size:9px}
.ds i{width:6px;height:6px;border:1px solid #999;background:#fff}
.line select{padding-left:73px;padding-right:15px;font-size:9px}
.bar{width:60px;height:3px;background:#000;margin:5px 0 0 10px;pointer-events:none}
.b3{display:flex;justify-content:space-between;height:16px;margin:9px -4px 5px -3px}
.b3 button{width:18px;border:1px solid #b4b4b4;opacity:.5}.b3 button.m{width:31px;opacity:1;border-color:#aaa;background:#f2f2f2}
hr{border:0;border-top:1px solid #c8c8c8;margin:0 -5px}
.f{display:flex;justify-content:center}.f button{width:19px;height:8px}`,
`<div class="w">
<div class="r">${ic('bucket')}${sel('Fill style','Solid',{ud:1,extra:'<i class="sw"></i>'})}</div><div class="box"></div>
<div class="r">${ic('pencil')}${sel('Pen style','Solid',{ud:1,extra:'<i class="sw"></i>'})}</div><div class="box k"></div>
<button class="pct">100%/100%</button>
<div class="ds"><span>Drop Sha...</span><button aria-label="Drop shadow"><i></i></button><button aria-label="Drop shadow settings">...</button></div>
${sel('Line thickness','0.70',{ud:1,cls:'line',extra:'<i class="bar"></i>'})}
<div class="b3"><button aria-label="Start marker">${ic('down')}</button><button class="m" aria-label="Link markers">${ic('chain')}</button><button aria-label="End marker">${ic('down')}</button></div>
<hr><div class="f"><button class="mini" aria-label="More">${ic('down')}</button></div></div>`);

const tools=['Constrain Coi...','Tape Measure','Protractor','General Notes','Redline','Stipple','Revision Cloud','Feature Contr...','Datum Featur...','Datum Target...','Surface Text...','Geom Dim an...','Detail Bubble','Section Note','Material Note','Center Line...','Title Block Bo...','Drawing Label','Reference Ma...','Section-Elev...','Interior-Eleva...','Detail-Callout...'];
def('vw-toolsets',`:host{flex:none;background:#fff}
.l button{display:flex;width:100%;height:25px;padding-bottom:5px;justify-content:flex-start;font-size:10px;white-space:nowrap}
.i{width:35px;display:flex;justify-content:center}
.p{margin-left:2px}
.g{display:grid;grid-template-columns:repeat(4,31px);grid-auto-rows:25px;width:126px;border:solid #a8a8a8;border-width:1px 0 0 1px;background:#ececec;height:75px}
.g button{border:solid #a8a8a8;border-width:0 1px 1px 0}
.g .on{background:#c4c4c4}
.gw{background:#ececec;margin-top:-2px}`,
`<div class="l">${tools.map((t,i)=>`<button><span class="i">${ic('t'+i)}</span><span>${t}</span>${i?'':`<span class="p">${ic('play')}</span>`}</button>`).join('')}</div>
<div class="gw"><div class="g">${[...Array(12)].map((_,i)=>`<button aria-label="Tool set ${i+1}" class="${i==7?'on':''}">${ic('g'+i)}</button>`).join('')}</div></div>`);

def('vw-snapping',`:host{flex:none;background:#ececec;padding-bottom:8px}
.g{display:grid;grid-template-columns:repeat(4,31px);grid-auto-rows:25px;width:125px}
button{border:solid #b4b4b4;border-width:0 1px 1px 0;background:linear-gradient(#e6e6e6,#f6f6f6)}
.on{background:linear-gradient(#c6c6c6,#d6d6d6)}`,
`<div class="g">${[...Array(8)].map((_,i)=>`<button aria-label="Snap ${i+1}" class="${[0,1,3,4].includes(i)?'on':''}">${ic('s'+i)}</button>`).join('')}</div>`);

def('vw-left',`:host{width:129px;flex:none;display:flex;flex-direction:column}`,
`<vw-head>Basic</vw-head><vw-basic></vw-basic><vw-more></vw-more><vw-divider></vw-divider>
<vw-head help>Attributes</vw-head><vw-attributes></vw-attributes><vw-divider></vw-divider>
<vw-head>Tool Sets</vw-head><vw-toolsets></vw-toolsets><vw-more></vw-more><vw-divider></vw-divider>
<vw-head help>Snapping</vw-head><vw-snapping></vw-snapping>`);

/* ---- centre ---- */
const M='.m2{margin-left:2px}.m4{margin-left:4px}.m6{margin-left:6px}.m8{margin-left:8px}.m10{margin-left:10px}.m12{margin-left:12px}.m16{margin-left:16px}.sep{width:1px;height:20px;background:#cdcdcd;flex:none}.on{background:#c9c9c9;border:1px solid #aaa}';
const b=(n,m,x='')=>`<button class="${m} ${x}" aria-label="${n}">${ic(n)}</button>`;
const s=m=>`<i class="sep ${m}"></i>`;
def('vw-tabs',`:host{height:24px;flex:none;background:linear-gradient(#c2c2c2,#aaa)}
.t{display:flex;align-items:center;width:238px;height:24px;margin-left:5px;padding-left:12px;gap:5px;font-size:13px;background:linear-gradient(90deg,#eee,#dadada);clip-path:polygon(0 100%,7px 1px,222px 1px,232px 100%)}
.row{display:flex}.e{width:12px;height:24px;background:#333;margin-left:-17px;clip-path:polygon(0 2px,2px 2px,12px 100%,9px 100%)}`,
`<div class="row"><div class="t"><button aria-label="Close tab">${ic('close')}</button><span>Untitled 1</span></div><i class="e"></i></div>`);

def('vw-viewbar',`${M}
:host{height:26px;flex:none;background:#ececec;border-bottom:1px solid #b4b4b4}
.r{display:flex;align-items:center;height:25px}
button{flex:none}
.w210{width:210px}.w44{width:44px}.w58{width:58px}
.w58 select{border-radius:0 4px 4px 0;padding-left:4px}
.pgi{align-self:center;justify-self:start;margin-left:10px;pointer-events:none}
input{width:66px;height:16px;border:1px solid #c8c8c8;font-size:9px;color:#aaa;padding:0 4px;background:#fff;flex:none}
.on{width:26px;height:20px}
.mini{width:15px;height:12px;margin-left:4px}`,
`<div class="r">${b('back','m4')}${b('fwd','m10')}${s('m4')}${b('cls','m6')}${sel('Active class','None',{cls:'w210 m10'})}${s('m8')}${b('lay','m6')}${b('sheet','m4')}${sel('Active layer','Sht-1 [Sheet Title]',{cls:'w210 m12'})}${s('m8')}<span class="m4">${ic('plane')}</span>${sel('Active plane','Screen Plane',{cls:'w210 m2',off:1})}${s('m4')}${sel('Saved views','',{cls:'w44 m2',extra:`<span class="pgi">${ic('pg')}</span>`})}${s('m4')}${b('magpg','m6')}${b('magsel','m8')}${s('m4')}${b('mag','m6')}${sel('Zoom','40%',{cls:'w58 m8'})}${s('m4')}${b('pink','m6')}${b('cyanr','m6','on')}${s('m2')}${sel('Current view','Top/Plan',{cls:'w210 m2',off:1})}${s('m2')}<span class="m6">${ic('axis')}</span><input class="m4" aria-label="Rotation" value="0.00°" disabled>${s('m4')}${b('mlay','m6')}${b('panes','m10')}${s('m4')}${sel('Projection','2D Plan',{cls:'w210 m4',off:1})}${s('m4')}${sel('Render mode','',{cls:'w44 m2',off:1,extra:`<span class="pgi">${ic('pot')}</span>`})}<button class="mini" aria-label="Bar options">${ic('play')}</button></div>`);

def('vw-modebar',`${M}
:host{height:36px;flex:none;background:#ececec}
.r{display:flex;align-items:center;height:36px;padding-right:8px}
button{flex:none}
.on{width:30px;height:24px}.on.wide{width:32px}
.c{display:flex;align-items:center;gap:2px}
.sp{flex:1}.msg{font-size:9px;white-space:nowrap}
.mini{width:15px;height:12px}`,
`<div class="r">${b('nosnap','m10')}${b('snap','m4','on')}${b('snap2','m2')}${s('m10')}${b('mv','m6','on')}${s('m4')}${b('box','m6','on')}${b('lasso','m6')}${b('plasso','m10')}${s('m10')}${b('door','m6','on')}${s('m6')}<span class="msg m8">Selection Tool: Rectangular Marquee Mode</span><span class="sp"></span>
${b('magslash','')}<span class="c m16">${b('gear','')}${ic('chev')}</span><span class="c m16">${b('pot2','')}${ic('chev')}</span><span class="c m12">${b('globe','')}${ic('chev')}</span>${b('eye','m10','on wide')}${b('link','m6','on wide')}${b('page','m12')}${b('pot3','m16')}<button class="mini m12" aria-label="Bar options">${ic('play')}</button></div>`);

const PITCH=87.1;
const inch=v=>{v=Math.abs(v);return v>=12?`1'-${v-12}"`:`${v}"`};
/* marks and labels are drawn only as far as the ruler reaches, again on each resize */
const drawRuler=(r,e)=>{
  const v=e.hasAttribute('vertical'),size=v?e.clientHeight:e.clientWidth,first=v?24.3:21.3,start=v?14:18;
  let d='',t='';
  for(let k=-1;first+k*PITCH<size;k++)for(let j=0;j<8;j++){
    const p=Math.round(first+k*PITCH+j*PITCH/8)+.5,len=j==0?14:j==4?5:3;
    if(p<0||p>size)continue;
    d+=v?`M${14-len} ${p}H14`:`M${p} ${14-len}V14`;
    if(j==0&&k>=0&&(v||p+26<size)){const l=inch(start-2*k);
      t+=v?`<text transform="translate(10 ${p-3}) rotate(-90)">${l}</text>`:`<text x="${p+3}" y="11">${l}</text>`;}
  }
  r.querySelector('svg').innerHTML=`<path d="${d}${v?`M13.5 0V${size}`:`M0 13.5H${size}`}" stroke="#666" fill="none"/>${t}${v?'':'<path d="M41.500 0V13" stroke="#555" stroke-dasharray="2 1"/>'}`;
};
def('vw-ruler',`:host{background:#fff;overflow:hidden;min-width:0;min-height:0}
:host([vertical]){width:14px;flex:none}:host(:not([vertical])){height:14px;flex:1}
svg{display:block;width:100%;height:100%}text{font:9px "Liberation Sans",sans-serif;fill:#777}`,
'<svg></svg>',(r,e)=>new ResizeObserver(()=>drawRuler(r,e)).observe(e));

def('vw-drawing',`:host{flex:1;min-width:0;background:#fff;overflow:hidden}
svg{display:block;width:100%;height:100%}
.h{stroke:#f98f1c;stroke-opacity:.7;stroke-width:6}.c{stroke:#a55900;stroke-width:3}.d{stroke:#663600;stroke-width:3}
.b{fill:#f98000;fill-opacity:.4}.n{stroke:#d87010;stroke-width:1;stroke-dasharray:2 1}
text{font-family:"Liberation Sans",sans-serif;fill:#111}`,
()=>{
 const T='M1432.500 1160v87M1432 1160.500H1704M1519.500 1160v86M1434 1174.500h84M1434 1189.500h84M1434 1203.500h84M1434 1218.500h84M1434 1232.500h84M1520 1187.500h184M1520 1219.500h184M1520 1236.500h184M1536.500 1219v17M1574.500 1219v17M1688.500 1219v17M1563.500 1236v10M1628.500 1236v10';
 const F='M181.500 246.500H1726.500V1268H181.500zM203.500 267.500H1704.500V1247.500H203.500z';
 const blobs=[[1434,1161,28],[1434,1176,20],[1434,1190,26],[1434,1205,28],[1434,1219,38],[1434,1234,31],[1521,1188,14],[1522,1221,12],[1544,1221,24],[1576,1221,36],[1691,1221,10],[1521,1239,20],[1565,1239,24],[1630,1239,18],[1664,1239,12],[1679,1237,4]];
 const stems=[[1434,1165,1174],[1434,1180,1189],[1434,1194,1203],[1434,1209,1218],[1434,1223,1232],[1525,1225,1235],[1553,1225,1235],[1626,1223,1234],[1694,1225,1235]];
 return `<svg><g transform="translate(-149 -124)" fill="none"><rect x="170.500" y="235.500" width="1567" height="1044" fill="#ededed" stroke="#777"/><rect x="182" y="247" width="1544" height="1021" fill="#fff"/>
<path class="h" d="${F}"/><path class="c" d="${F}"/><path class="h" d="${T}"/><path class="d" d="${T}"/><path class="c" d="M1704.500 1160V1247.500H1432" style="stroke:#c66a00"/>
${blobs.map(([x,y,w])=>`<rect class="b" x="${x}" y="${y}" width="${w}" height="5"/><path class="n" d="M${x+2} ${y+2.5}h${w-4}"/>`).join('')}${stems.map(([x,y,z])=>`<rect class="b" x="${x}" y="${y}" width="5" height="${z-y}"/>`).join('')}
<rect class="b" x="1590" y="1196" width="44" height="14"/><text x="1612" y="1206" font-size="8" text-anchor="middle">[Sheet Title]</text>
<rect class="b" x="1646" y="1238" width="20" height="7"/><text x="1656" y="1244" font-size="7" text-anchor="middle">Sht-1</text></g></svg>`;
});

def('vw-doc',`:host{flex:1;min-width:0;display:flex;flex-direction:column}
.r{display:flex;flex:none;height:14px}.r span{width:14px;display:flex;align-items:center;justify-content:center;background:#fff}
.m{display:flex;flex:1;min-height:0}`,
`<vw-tabs></vw-tabs><vw-viewbar></vw-viewbar><vw-modebar></vw-modebar><div class="r"><span>${ic('target')}</span><vw-ruler></vw-ruler></div><div class="m"><vw-ruler vertical></vw-ruler><vw-drawing></vw-drawing></div>`);

/* ---- object info ---- */
def('vw-object-info',`:host{position:relative;flex:852 1 0;min-height:0;display:flex;flex-direction:column;background:#ececec;font-size:9px}
:host::after{content:"";position:absolute;inset:-7px -2px 0 -5px;border:5px solid #ff2310;box-shadow:3px 3px 2px #333a,inset 2px 2px 2px #333a;pointer-events:none;z-index:3}
.tabs{display:flex;justify-content:center;height:15px;margin:4px 0 0;flex:none;background:linear-gradient(#c8c8c8,#c8c8c8) 0 8px/100% 1px no-repeat}
.tabs button{background:#fff;border:1px solid #c4c4c4;border-left-width:0;font-size:9px;height:15px;width:39px}
.tabs .a{width:47px;border-radius:4px 0 0 4px;background:linear-gradient(#5eb1ff,#1a86ff);color:#fff}
.tabs .z{width:51px;border-radius:0 4px 4px 0}
.top{display:flex;justify-content:flex-end;position:absolute;right:3px;top:16px}.mini{width:11px;height:10px}
h2{margin:0;font-size:10px;line-height:19px;height:23px;padding:4px 0 0 2px;border-bottom:1px solid #c8c8c8;flex:none}
form{display:flex;flex-direction:column;gap:5px;padding:5px 6px 0;flex:1;min-height:0}
.r{display:flex;align-items:center;padding-left:2px;height:15px;flex:none}
.r label,.r b{width:103px;font-weight:400}.r.n label{width:33px}
.r .sel{flex:1}
.r.t{height:16px}input:not([type]){flex:1;min-width:0;height:16px;border:1px solid #b8b8b8;background:#fff;padding:0 3px;font-size:9px}
.lay select{padding-left:29px}.li{justify-self:start;margin:1px 0 0 11px;pointer-events:none}
.grp{display:flex;background:#e3e3e3;border:1px solid #dadada;border-radius:4px;height:68px;padding:3px 8px 0 14px;flex:none}
.pl{display:flex;flex-direction:column;gap:2px;padding-top:5px;width:33px}
.pl button{width:19px;height:16px;border:1px solid #aaa;background:#f2f2f2;overflow:hidden}.pl button:first-child{background:#c9c9c9}
.xyz{flex:1;display:flex;flex-direction:column;gap:4px}.xyz .r label{width:16px}.xyz .r{padding:0}
.ck{display:flex;align-items:center;gap:3px;height:10px;margin-bottom:4px;flex:none}
.ck span{display:grid;width:10px;height:10px}.ck span>*{grid-area:1/1}
.ck input{appearance:none;width:10px;height:10px;border:1px solid #b4b4b4;border-radius:2px;background:#fff}
.ck input:checked{background:#2f8ef7;border-color:#1c7ae0;color:#fff}.ck input:disabled{background:#f2f2f2;border-color:#c4c4c4}
.ck vw-icon{margin:1px;color:#fff;pointer-events:none}.ck.off vw-icon{color:#888}
.ck.off{color:#a4a4a4}.g7{color:#7a7a7a}
.bt{height:15px;border:1px solid #c4c4c4;border-bottom-color:#aaa;border-radius:4px;background:#fff;font-size:9px;flex:none}
.bt:disabled{background:#f2f2f2;color:#b0b0b0;border-color:#d0d0d0}
.d{height:14px}.v{padding-left:2px}
.nm{display:flex;align-items:center;height:31px;padding:0 3px 4px 5px;border-top:1px solid #c8c8c8;flex:none}.nm label{width:35px}`,
`<vw-head help>Object Info</vw-head><div class="top"><button class="mini" aria-label="Palette options">${ic('play')}</button></div>
<div class="tabs"><button class="a">Shape</button><button>Data</button><button class="z">Render</button></div>
<h2>Title Block Border</h2>
<form>
<div class="r n"><label for="cl">Class:</label>${sel('Class','None',{id:'cl'})}</div>
<div class="r n"><label for="ly">Layer:</label>${sel('Layer','Sht-1 [Sheet Title]',{id:'ly',ud:1,cls:'lay',extra:`<span class="li">${ic('laysm')}</span>`})}</div>
<div class="grp"><div class="pl"><button type="button" aria-label="Layer plane">${ic('cyan')}</button><button type="button" aria-label="Screen plane">${ic('pink')}</button></div>
<div class="xyz">${['X','Y','Z'].map(a=>`<div class="r t"><label for="i${a}">${a}:</label><input id="i${a}" value='0"'></div>`).join('')}</div></div>
<div class="r t"><label for="ro">Rotation:</label><input id="ro" value="0.00°"></div>
<div class="r"><label for="st">Style:</label>${sel('Style','ASME',{id:'st'})}</div>
<label class="ck"><span><input type="checkbox"></span>Hide Style Parameters</label>
<button type="button" class="bt">Title Block Border Settings...</button>
<button type="button" class="bt" disabled>Edit Title Block Layout...</button>
<label class="ck"><span><input type="checkbox" checked>${ic('tick')}</span>This Title Block is Active</label>
<label class="ck off"><span><input type="checkbox" checked disabled>${ic('tick')}</span>Use Automatic Drawing Coordination</label>
<div class="r g7"><label for="sz">Sheet Size:</label>${sel('Sheet Size','Fit to Page',{id:'sz',off:1})}</div>
<div class="r g7"><label for="or">Orientation:</label>${sel('Orientation','Landscape',{id:'or',off:1})}</div>
<div class="r d"><b>Horizontal Dimension:</b><span class="v">2'11 1/2"</span></div>
<div class="r d"><b>Vertical Dimension:</b><span class="v">1'11 1/2"</span></div>
<label class="ck"><span><input type="checkbox"></span>Display North Arrow</label>
<button type="button" class="bt">Drawing Stamp...</button>
</form>
<div class="nm"><label for="nm">Name:</label><input id="nm"></div>`);

def('vw-navigation',`:host{position:relative;flex:528 1 0;min-height:0;display:flex;flex-direction:column;background:#ececec}
.top{display:flex;justify-content:center;height:18px;margin:5px 0 0;background:linear-gradient(#d0d0d0,#d0d0d0) 0 9px/100% 1px no-repeat;flex:none}
.top button{width:28px;background:#fff;border:1px solid #c8c8c8;border-left-width:0}
.top button:first-child{border-radius:4px 0 0 4px;border-left-width:1px}.top .z{border-radius:0 4px 4px 0}
.top .s{background:linear-gradient(#5eb1ff,#1a86ff)}
.o{position:absolute;right:7px;top:16px}.mini{width:12px;height:10px}
.w{flex:1;min-height:0;margin:6px 4px 1px 3px;background:#fff;border:1px solid #c8c8c8;border-width:1px 1px 1px 0}
table{border-collapse:collapse;table-layout:fixed;width:100%;font-size:9px}
th{height:22px;font:400 11px Inter,sans-serif;color:#444;text-align:left;padding:0 0 0 4px;border-bottom:1px solid #d8d8d8;border-right:1px solid #ddd;white-space:nowrap}
th:last-child{border-right:0}
td{height:14px;background:#dcdcdc;padding:0 0 0 4px;line-height:13px}
td vw-icon{margin-left:1px}`,
`<vw-head help>Navigation - Sheet Layers</vw-head><div class="o"><button class="mini" aria-label="Palette options">${ic('play')}</button></div>
<div class="top"><button aria-label="Classes">${ic('cls')}</button><button aria-label="Design layers">${ic('lay')}</button><button class="s" aria-label="Sheet layers">${ic('sheet')}</button><button aria-label="Viewports">${ic('vport')}</button><button aria-label="Saved views">${ic('pg')}</button><button class="z" aria-label="References">${ic('refa')}</button></div>
<div class="w"><table><colgroup><col style="width:25px"><col style="width:83px"><col style="width:153px"><col style="width:28px"><col></colgroup><tr><th></th><th>Sheet Numb...</th><th>Sheet Title</th><th>#</th><th></th></tr>
<tr><td>${ic('check')}</td><td><b>Sht-1</b></td><td>[Sheet Title]</td><td>1</td><td></td></tr></table></div>`);

/* ---- resource manager ---- */
const folders=['Defaults','Object Styles',...['Architecture','Building Equip_Appliances','Building Furnishings','Building Services','Ent Audio','Ent Controls','Ent Event','Ent Lighting Accessories','Ent Lighting Gobos','Ent Lighting Instruments','Ent Stage','Ent Truss','Landscape Furnishings','Landscape Plants','Landscape Site','Miscellaneous_Entourage'].map(x=>'Objects - '+x),'Renderworks Cameras'];
const group=(i,t,open,c='')=>`<li class="h ${c}"><i class="tw">${open?ic('tdown'):''}</i><i class="ii">${ic(i)}</i>${t}</li>`;
const fol=t=>`<li><i class="tw k">${ic('tright')}</i><i class="ii">${ic('folder')}</i>${t}</li>`;
def('vw-tree',`:host{flex:none;margin:0 4px 0 5px;background:#fff;border:1px solid #c0c0c0;overflow:hidden}
ul{margin:0;padding:0 0 8px;list-style:none;font-size:11px}
li{display:flex;align-items:center;height:19px;white-space:nowrap}
.h{font-weight:700;background:#f5f5f5;border-bottom:1px solid #c8c8c8}
.cur{background:#dcdcdc;font-weight:700;padding-left:35px}
.tw{width:17px;display:flex;justify-content:flex-end;flex:none}.tw.k{width:32px}
.ii{width:20px;display:flex;justify-content:center;flex:none}
.h .ii{width:16px;margin-right:4px}.k+.ii{margin-right:2px}
.cur .ii{width:16px;margin-right:4px}.f{border-bottom-width:2px}.u{border-top:1px solid #c8c8c8;border-bottom-width:2px}`,
`<ul>${group('vw','Open Files',1)}<li class="cur"><i class="ii">${ic('vwf')}</i>Untitled 1</li>${group('star','Favorites',0,'f')}${group('vw','Vectorworks Libraries',1)}${folders.map(fol).join('')}${group('user','User Libraries',0,'u')}${group('group','Workgroup Libraries',1)}${fol('Workgroup Libraries(VW Shared Items-Dropbox)')}</ul>`);

def('vw-resources',`:host{width:318px;flex:none;display:flex;flex-direction:column;background:#ececec;font-size:11px;--bar:#ececec}
.s{display:flex;align-items:center;height:28px;padding:0 7px 0 5px;flex:none}
.s>button{width:22px;height:18px;border:1px solid #bbb;border-radius:4px;background:#fff;margin-right:5px}
.s>button:nth-of-type(2){background:#f4f4f4;border-color:#d0d0d0}
.s>.mo{border:0;background:none;margin:0;width:22px}
.f{flex:1;display:grid;height:19px}
.f>*{grid-area:1/1}
.f input{width:100%;height:19px;border:1px solid #bbb;border-radius:4px;background:#fff;text-align:center;font-size:11px;padding:0}
.f input::placeholder{color:#c2c2c2}
.f vw-icon{justify-self:center;align-self:center;margin-right:60px;pointer-events:none}
.bx{margin:0 4px 0 5px;background:#fff;border:1px solid #c0c0c0}
.c{flex:1;min-height:0}.bc{display:flex;align-items:center;height:20px;padding-left:6px;border-bottom:1px solid #b4b4b4;color:#222}
.bc span{margin:0 7px 0 5px}.bc vw-icon:nth-of-type(2){margin-left:7px}.bc b{font-weight:400;margin-left:4px}
.it{width:74px;padding:12px 0 0 4px;color:#b8001c}.it p{margin:6px 0 0;text-align:center;line-height:14px;width:64px}
.pv{height:200px;flex:none;display:flex;flex-direction:column;justify-content:flex-end;border-color:#999}
.bl{display:flex;gap:12px;align-items:center;height:26px;background:#0075e8;padding-left:10px}
.bl button{width:44px;height:16px;border-radius:3px;background:#7fb8f2;justify-content:space-between;padding:0 3px 0 8px;color:#124a86}
.bl vw-icon:first-child{opacity:.6}.bl button:first-child vw-icon:first-child{filter:grayscale(.8)}
.dt{height:164px;flex:none}
table{width:100%;border-collapse:collapse;table-layout:fixed}th{height:21px;font-weight:400;text-align:left;color:#444;padding:0 3px;border-bottom:1px solid #ccc;background:linear-gradient(#ddd,#ddd) 100% 2px/1px 17px no-repeat}th:last-child{background:none}
.ft{display:flex;align-items:center;height:24px;padding-left:5px;flex:none}
.ft button{height:18px;border:1px solid #c4c4c4;border-bottom-color:#aaa;border-radius:4px;background:#fff;width:102px;margin-right:15px}.ft button+button{width:85px}
.ft span{flex:1}`,
`<vw-head help>Resource Manager</vw-head>
<div class="s"><button aria-label="Home">${ic('home')}</button><button aria-label="Up">${ic('upf')}</button><div class="f"><input aria-label="Search" placeholder="Search">${ic('search')}</div><button class="mo" aria-label="More">${ic('more')}</button></div>
<vw-tree></vw-tree><vw-divider></vw-divider>
<div class="bx c"><div class="bc">${ic('vw')}<span>Open Files</span>›${ic('vwf')}<b>Untitled 1</b></div><div class="it">${ic('thumb')}<p>ASME</p></div></div>
<vw-divider></vw-divider>
<div class="bx pv"><div class="bl"><button aria-label="Preview view">${ic('home')}${ic('chev')}</button><button aria-label="Preview render mode">${ic('pot')}${ic('chev')}</button></div></div>
<vw-divider></vw-divider>
<div class="bx dt"><table><tr><th>Data</th><th></th><th></th></tr></table></div>
<div class="ft"><button>New Resource...</button><button>New Folder...</button><span>1 Item</span>${ic('grip')}</div>`);

/* ---- window ---- */
def('vw-titlebar',`:host{height:24px;flex:none;border-top:1px solid #b9d8ee;background:linear-gradient(#12304f 1px,#f0f0f0 1px,#d2d2d2);border-bottom:1px solid #b0b0b0}
.r{display:grid;grid-template-columns:1fr auto 1fr;align-items:center;height:22px}
.l{display:flex;align-items:center;gap:8px;font-size:12px;color:#9a9a9a;padding-left:8px}
.l i{width:12px;height:12px;border-radius:50%;background:#fdb62f}.l i:first-child{background:radial-gradient(#888 2px,#ccc 3px);border:1px solid #b8b8b8}.l i:nth-child(3){background:#27c63e}
.l span{margin-left:9px}h1{margin:0;font:400 13px Inter,sans-serif;color:#333}`,
`<div class="r"><div class="l"><i></i><i></i><i></i><span>Vectorworks Designer 2018</span></div><h1>Untitled 1</h1></div>`);

def('vw-status',`:host{height:15px;flex:none;background:#d7d7d7;border-top:1px solid #c0c0c0;font-size:9px}
.r{display:flex;align-items:center;height:14px;padding:0 14px 0 8px}
.m{flex:1}.x{width:79px;height:14px;line-height:13px;margin-right:2px;padding-left:4px;border:1px solid #b4b4b4;border-width:1px 1px 0 1px;box-shadow:-1px 0 #b4b4b4;white-space:pre}
.i{display:flex;gap:10px;margin:0 0 0 5px;width:31px;opacity:.9}`,
`<div class="r"><span class="m">For Help, press F1 or click the ? icon</span><span class="x">X:  -1'5.531"</span><span class="x">Y:  1'2.719"</span><span class="x">L:  1'10.891"</span><span class="x">A:  139.98°</span><span class="i">${ic('bell')}${ic('tright')}</span></div>`);

def('vw-app',`:host{display:flex;flex-direction:column;height:100vh;cursor:default}
main{flex:1;min-height:0;display:flex}
.st{width:6px;flex:none;background:#bbb}.st5{width:5px}
.mid{width:329px;flex:none;display:flex;flex-direction:column}`,
`<vw-titlebar></vw-titlebar><main><vw-left></vw-left><i class="st"></i><vw-doc></vw-doc><i class="st st5"></i><div class="mid"><vw-object-info></vw-object-info><vw-navigation></vw-navigation></div><i class="st"></i><vw-resources></vw-resources></main><vw-status></vw-status>`);
</script>
</body>
</html>
